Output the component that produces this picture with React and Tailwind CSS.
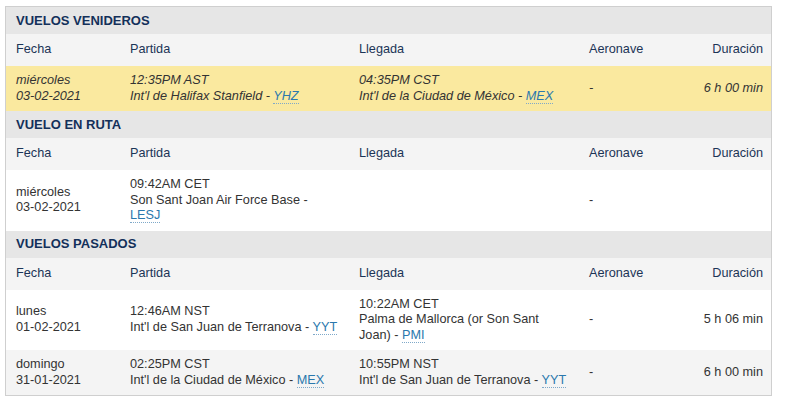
import React from 'react';

const cols = 'grid grid-cols-[114px_229px_230px_1fr_120px]';

const Code = ({ children }) => (
  <span className="text-[#2a78ad] border-b border-dotted border-[#7fa9c9]">{children}</span>
);

const Section = ({ title }) => (
  <div className="h-[27px] bg-[#e6e6e6] pl-[10px] flex items-center font-bold text-[13px] text-[#13305a]">{title}</div>
);

const HeadRow = () => (
  <div className={`${cols} h-8 items-center bg-[#f4f4f4] text-[#1c3557]`}>
    <div className="pl-[10px]">Fecha</div>
    <div className="pl-[10px]">Partida</div>
    <div className="pl-[10px]">Llegada</div>
    <div className="pl-[10px]">Aeronave</div>
    <div className="pr-[8px] text-right">Duración</div>
  </div>
);

const Place = ({ time, name, code }) => (
  <div className="pl-[10px] pr-[10px]">
    <div>{time}</div>
    <div>
      {name} - <Code>{code}</Code>
    </div>
  </div>
);

const FlightRow = ({ day, date, dep, arr, dur, bg = 'bg-white', italic }) => (
  <div className={`${cols} items-center py-[7px] ${bg} ${italic ? 'italic' : ''}`}>
    <div className="pl-[10px]">
      <div>{day}</div>
      <div>{date}</div>
    </div>
    {dep ? <Place {...dep} /> : <div />}
    {arr ? <Place {...arr} /> : <div />}
    <div className="pl-[10px]">-</div>
    <div className="pr-[8px] text-right">{dur}</div>
  </div>
);

export default function App() {
  return (
    <div className="bg-white w-[785px] h-[407px] pt-[6px] pl-[5px] font-['Liberation_Sans',Arial,sans-serif] text-[12.7px] leading-[15.5px] text-[#333]">
      <div className="w-[767px] border border-[#cfcfcf]">
        <Section title="VUELOS VENIDEROS" />
        <HeadRow />
        <FlightRow
          italic
          bg="bg-[#fae99f]"
          day="miércoles"
          date="03-02-2021"
          dep={{ time: '12:35PM AST', name: "Int'l de Halifax Stanfield", code: 'YHZ' }}
          arr={{ time: '04:35PM CST', name: "Int'l de la Ciudad de México", code: 'MEX' }}
          dur="6 h 00 min"
        />
        <Section title="VUELO EN RUTA" />
        <HeadRow />
        <FlightRow
          day="miércoles"
          date="03-02-2021"
          dep={{ time: '09:42AM CET', name: 'Son Sant Joan Air Force Base', code: 'LESJ' }}
          dur=""
        />
        <Section title="VUELOS PASADOS" />
        <HeadRow />
        <FlightRow
          day="lunes"
          date="01-02-2021"
          dep={{ time: '12:46AM NST', name: "Int'l de San Juan de Terranova", code: 'YYT' }}
          arr={{ time: '10:22AM CET', name: 'Palma de Mallorca (or Son Sant Joan)', code: 'PMI' }}
          dur="5 h 06 min"
        />
        <FlightRow
          bg="bg-[#f4f4f4]"
          day="domingo"
          date="31-01-2021"
          dep={{ time: '02:25PM CST', name: "Int'l de la Ciudad de México", code: 'MEX' }}
          arr={{ time: '10:55PM NST', name: "Int'l de San Juan de Terranova", code: 'YYT' }}
          dur="6 h 00 min"
        />
      </div>
    </div>
  );
}
